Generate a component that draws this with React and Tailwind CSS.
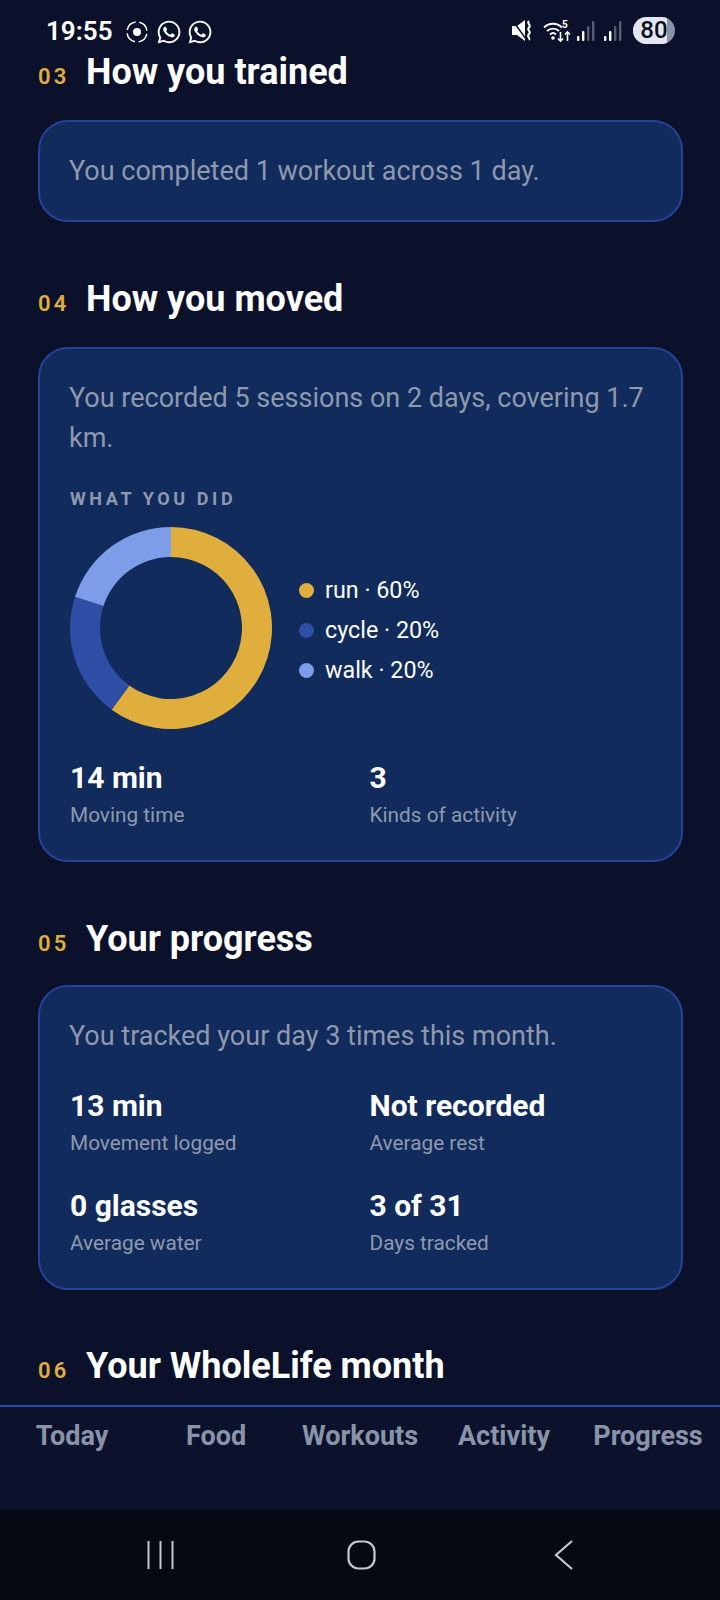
import React from 'react';
import { FaWhatsapp } from 'react-icons/fa';

const segments = [
  { color: '#e0ae3c', start: 0, end: 216 },
  { color: '#2f4fa6', start: 216, end: 288 },
  { color: '#7e9de8', start: 288, end: 360 },
];

const legend = [
  { label: 'run · 60%', dot: 'bg-[#e0ae3c]' },
  { label: 'cycle · 20%', dot: 'bg-[#2f4fa6]' },
  { label: 'walk · 20%', dot: 'bg-[#7e9de8]' },
];

const tabs = ['Today', 'Food', 'Workouts', 'Activity', 'Progress'];

const polar = (r, deg) => {
  const a = ((deg - 90) * Math.PI) / 180;
  return [101 + r * Math.cos(a), 101 + r * Math.sin(a)];
};

const arc = (start, end) => {
  const [x1, y1] = polar(101, start);
  const [x2, y2] = polar(101, end);
  const [x3, y3] = polar(71, end);
  const [x4, y4] = polar(71, start);
  const large = end - start > 180 ? 1 : 0;
  return `M${x1} ${y1}A101 101 0 ${large} 1 ${x2} ${y2}L${x3} ${y3}A71 71 0 ${large} 0 ${x4} ${y4}Z`;
};

const Donut = () => (
  <svg width="202" height="202" viewBox="0 0 202 202" className="shrink-0">
    {segments.map((s) => (
      <path key={s.color} d={arc(s.start, s.end)} fill={s.color} />
    ))}
  </svg>
);

const SignalBars = () => (
  <svg width="18" height="22" viewBox="0 0 18 22">
    <rect x="0" y="16" width="2.4" height="5" rx="1" fill="#fff" />
    <rect x="5" y="11" width="2.4" height="10" rx="1" fill="#fff" />
    <rect x="10" y="6" width="2.4" height="15" rx="1" fill="#565d70" />
    <rect x="15" y="1" width="2.4" height="20" rx="1" fill="#565d70" />
  </svg>
);

const StatusBar = () => (
  <div className="h-[52px] shrink-0 flex items-start justify-between pl-[46px] pr-[45px] pt-[17px] text-white">
    <div className="flex items-center h-[29px]">
      <span className="text-[26px] leading-[29px] font-semibold">19:55</span>
      <svg width="24" height="24" viewBox="0 0 24 24" className="ml-[12px]" fill="none">
        <circle cx="12" cy="12" r="4" fill="#fff" />
        <circle cx="12" cy="12" r="10" stroke="#fff" strokeWidth="1.5" strokeDasharray="12 3.700" strokeDashoffset="-2" />
      </svg>
      <FaWhatsapp className="ml-[7px] text-[26px]" />
      <FaWhatsapp className="ml-[5px] text-[26px]" />
    </div>
    <div className="flex items-center h-[27px]">
      <svg width="21" height="21" viewBox="0 0 21 21" fill="none">
        <path d="M0 6h5L13 0v21l-8-6H0z" fill="#fff" />
        <path d="M1 1l13 18" stroke="#0b112b" strokeWidth="1.400" />
        <path d="M17 1c-3 2.500 3 3.500 0 6.500s3 3.500 0 6.500 2 4 0 6" stroke="#fff" strokeWidth="2" />
      </svg>
      <svg width="28" height="24" viewBox="0 0 28 24" className="ml-[10px]" fill="none">
        <path d="M1 8.500c5-5 13-5 18 0M4 12c3.200-3.200 8.800-3.200 12 0M7 15.500c1.800-1.800 4.200-1.800 6 0" stroke="#fff" strokeWidth="1.900" />
        <circle cx="10" cy="19" r="1.800" fill="#fff" />
        <path d="M17.500 13v9M15 19.500l2.500 2.500 2.500-2.500M24.500 22v-9M22 15.500l2.500-2.500 2.500 2.500" stroke="#fff" strokeWidth="1.600" />
        <text x="19" y="9" fontSize="10" fontWeight="700" fill="#fff" fontFamily="Roboto, sans-serif">5</text>
      </svg>
      <div className="ml-[6px]"><SignalBars /></div>
      <div className="ml-[9px]"><SignalBars /></div>
      <div className="ml-[11px] relative w-[42px] h-[27px] rounded-full bg-[#8d92a3] overflow-hidden">
        <div className="absolute left-0 top-0 bottom-0 w-[34px] bg-[#e3e7f2]" />
        <span className="absolute inset-0 text-center text-[#0b1020] text-[24px] leading-[27px] font-medium">80</span>
      </div>
    </div>
  </div>
);

const Heading = ({ num, title, className = 'mb-[28px]' }) => (
  <div className={`flex items-baseline h-[40px] ${className}`}>
    <span className="w-[48px] text-[22px] font-semibold tracking-[0.14em] text-[#e0ae3c]">{num}</span>
    <h2 className="text-[36px] leading-[40px] font-bold text-white">{title}</h2>
  </div>
);

const Card = ({ children, className = 'mb-[57px]' }) => (
  <div className={`rounded-[30px] border-2 border-[#25429a] bg-[#112b5c] px-[30px] py-[29px] ${className}`}>
    {children}
  </div>
);

const Lead = ({ children }) => (
  <p className="-ml-[1px] text-[27px] leading-[40px] text-[#8e99ae]">{children}</p>
);

const Stat = ({ value, label }) => (
  <div>
    <div className="text-[30px] leading-[36px] font-bold text-white">{value}</div>
    <div className="mt-[4px] text-[20.800px] leading-[30px] text-[#8e99ae]">{label}</div>
  </div>
);

export default function App() {
  return (
    <div className="h-[1600px] w-[720px] flex flex-col overflow-hidden bg-[#0b112b] font-['Roboto',sans-serif]">
      <StatusBar />
      <main className="flex-1 min-h-0 overflow-hidden pl-[38px] pr-[37px]">
        <Heading num="03" title="How you trained" />
        <Card>
          <Lead>You completed 1 workout across 1 day.</Lead>
        </Card>

        <Heading num="04" title="How you moved" />
        <Card>
          <Lead>You recorded 5 sessions on 2 days, covering 1.7 km.</Lead>
          <div className="mt-[28px] text-[18px] leading-[26px] font-bold tracking-[0.2em] text-[#8e99ae]">WHAT YOU DID</div>
          <div className="mt-[15px] flex items-center gap-[27px]">
            <Donut />
            <ul className="mt-[4px] flex flex-col gap-[8px]">
              {legend.map((l) => (
                <li key={l.label} className="flex items-center gap-[11px] h-[32px] text-[23.300px] text-white">
                  <span className={`w-[15px] h-[15px] rounded-full ${l.dot}`} />
                  {l.label}
                </li>
              ))}
            </ul>
          </div>
          <div className="mt-[31px] pb-[1px] grid grid-cols-2 gap-x-[18px] gap-y-[30px]">
            <Stat value="14 min" label="Moving time" />
            <Stat value="3" label="Kinds of activity" />
          </div>
        </Card>

        <Heading num="05" title="Your progress" className="mb-[26px]" />
        <Card className="mb-[56px]">
          <Lead>You tracked your day 3 times this month.</Lead>
          <div className="mt-[32px] pb-[1px] grid grid-cols-2 gap-x-[18px] gap-y-[30px]">
            <Stat value="13 min" label="Movement logged" />
            <Stat value="Not recorded" label="Average rest" />
            <Stat value="0 glasses" label="Average water" />
            <Stat value="3 of 31" label="Days tracked" />
          </div>
        </Card>

        <Heading num="06" title="Your WholeLife month" />
      </main>

      <nav className="h-[105px] shrink-0 border-t-2 border-[#2a4aa6] bg-[#0c122c] grid grid-cols-5 pt-[11px]">
        {tabs.map((t) => (
          <span key={t} className="text-center text-[27px] leading-[36px] font-bold text-[#8a94a8]">{t}</span>
        ))}
      </nav>

      <div className="h-[90px] shrink-0 bg-[#060914] flex items-center pl-[147px] text-[#c3c7d0]">
        <svg width="27" height="28" viewBox="0 0 27 28" fill="none" stroke="currentColor" strokeWidth="2">
          <path d="M1.500 0v28M13.500 0v28M25.500 0v28" />
        </svg>
        <svg width="29" height="30" viewBox="0 0 29 30" className="ml-[173px]" fill="none" stroke="currentColor" strokeWidth="2.200">
          <rect x="1.500" y="1.500" width="26" height="27" rx="10" />
        </svg>
        <svg width="19" height="30" viewBox="0 0 19 30" className="ml-[178px]" fill="none" stroke="currentColor" strokeWidth="2.200">
          <path d="M18 1L2 15l16 14" />
        </svg>
      </div>
    </div>
  );
}
